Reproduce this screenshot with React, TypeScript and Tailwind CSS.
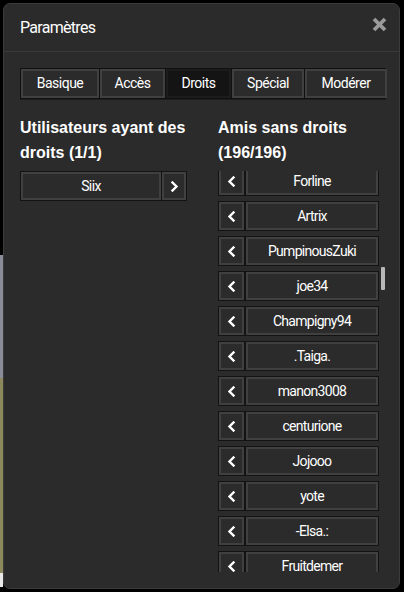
import React from "react";

const FONT = { fontFamily: '"Roboto", "Liberation Sans", sans-serif' };
const BOLD = { fontFamily: '"Liberation Sans", Arial, sans-serif' };

const friends = [
  "Forline",
  "Artrix",
  "PumpinousZuki",
  "joe34",
  "Champigny94",
  ".Taiga.",
  "manon3008",
  "centurione",
  "Jojooo",
  "yote",
  "-Elsa.:",
  "Fruitdemer",
];

const tabs = [
  { label: "Basique", w: "w-[79px]", active: false },
  { label: "Accès", w: "w-[66px]", active: false },
  { label: "Droits", w: "w-[66px]", active: true },
  { label: "Spécial", w: "w-[73px]", active: false },
  { label: "Modérer", w: "w-[82px]", active: false },
];

function Chevron({ dir }: { dir: "left" | "right" }) {
  return (
    <svg width="9" height="11" viewBox="0 0 9 11" className="block">
      <path
        d={dir === "left" ? "M6.5 1.5 L2.5 5.5 L6.5 9.5" : "M2.5 1.5 L6.5 5.5 L2.5 9.5"}
        fill="none"
        stroke="#ffffff"
        strokeWidth="2.4"
        strokeLinecap="square"
      />
    </svg>
  );
}

function Btn({
  className,
  children,
}: {
  className?: string;
  children?: React.ReactNode;
}) {
  return (
    <div className={"border border-[#131313] " + (className ?? "")}>
      <div className="h-full w-full border-2 border-[#404040] bg-[#2b2b2b] flex items-center justify-center">
        {children}
      </div>
    </div>
  );
}

export default function App() {
  return (
    <div className="w-[404px] h-[592px] bg-black flex overflow-hidden" style={FONT}>
      <div className="w-[3px] flex flex-col shrink-0">
        <div className="h-[255px] bg-black" />
        <div className="h-[123px] bg-[#8a8c99]" />
        <div className="h-[195px] bg-[#8c8a5c]" />
        <div className="h-[14px] bg-[#e8e8e8]" />
      </div>
      <div className="mt-[3px] w-[397px] h-[586px] rounded-[7px] border border-[#3b3b3b] bg-[#2b2b2b] flex flex-col shrink-0">
        <div className="h-[48px] border-b border-[#3a3a3a] flex items-center justify-between pl-[16px] pr-[12px]">
          <span className="text-[16px] text-white leading-none mt-[1px] tracking-[-0.7px]">
            Paramètres
          </span>
          <svg width="15" height="15" viewBox="0 0 15 15" className="mb-[6px]">
            <path d="M2 2 L13 13 M13 2 L2 13" stroke="#9a9a9a" strokeWidth="3.8" strokeLinecap="butt" />
          </svg>
        </div>
        <div className="pl-[16px] pt-[16px]">
          <div className="flex w-[366px] h-[31px] border border-[#111] bg-[#111] shadow-[0_1px_0_#1c1c1c]">
            {tabs.map((t) => (
              <div
                key={t.label}
                className={t.w + " h-full border-r border-[#111] last:border-r-0 shrink-0"}
              >
                <div
                  className={
                    "h-full w-full border-2 flex items-center justify-center text-[14px] text-white tracking-[-0.5px] " +
                    (t.active ? "bg-[#141414] border-[#1c1c1c]" : "bg-[#2b2b2b] border-[#404040]")
                  }
                >
                  {t.label}
                </div>
              </div>
            ))}
          </div>
          <div className="flex mt-[16px]">
            <div className="w-[167px] shrink-0">
              <div className="text-[16px] font-bold text-white leading-[25px]" style={BOLD}>
                Utilisateurs ayant des droits (1/1)
              </div>
              <div className="flex mt-[6px] h-[30px]">
                <Btn className="w-[142px]">
                  <span className="text-[14px] text-white tracking-[-0.6px]">Siix</span>
                </Btn>
                <Btn className="w-[26px] -ml-px">
                  <Chevron dir="right" />
                </Btn>
              </div>
            </div>
            <div className="w-[170px] ml-[31px] shrink-0">
              <div className="text-[16px] font-bold text-white leading-[25px]" style={BOLD}>
                Amis sans droits (196/196)
              </div>
              <div className="relative h-[401px] mt-[6px] overflow-hidden">
                <div className="flex flex-col gap-[5px] -mt-[5px]">
                  {friends.map((f) => (
                    <div key={f} className="flex h-[30px] w-[161px] shrink-0">
                      <Btn className="w-[27px]">
                        <Chevron dir="left" />
                      </Btn>
                      <Btn className="w-[134px]">
                        <span className="text-[14px] text-white tracking-[-0.7px]">{f}</span>
                      </Btn>
                    </div>
                  ))}
                </div>
                <div className="absolute left-[163px] top-[96px] w-[4px] h-[23px] bg-[#b8b8b8] rounded-[1px]" />
              </div>
            </div>
          </div>
        </div>
      </div>
    </div>
  );
}
